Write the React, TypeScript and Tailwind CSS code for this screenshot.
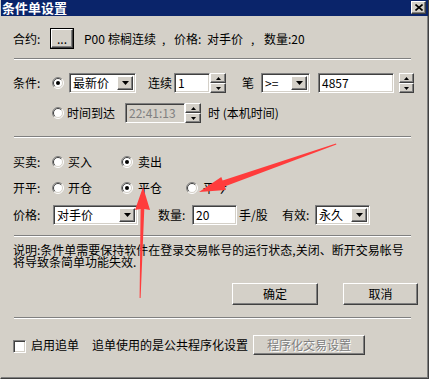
import React from "react";

const sunken =
  "border border-t-[#808080] border-l-[#808080] border-b-white border-r-white shadow-[inset_1px_1px_0_#404040,inset_-1px_-1px_0_#d4d0c8]";
const raised =
  "border border-t-white border-l-white border-b-[#404040] border-r-[#404040] shadow-[inset_-1px_-1px_0_#808080]";

function Radio({ checked }: { checked?: boolean }) {
  return (
    <svg width="12" height="12" viewBox="0 0 12 12" className="block shrink-0">
      <circle cx="6" cy="6" r="5" fill="#fff" />
      <path d="M2.1 9.9 A5.5 5.5 0 0 1 9.9 2.1" stroke="#808080" fill="none" strokeWidth="1" />
      <path d="M9.9 2.1 A5.5 5.5 0 0 1 2.1 9.9" stroke="#fff" fill="none" strokeWidth="1" />
      <path d="M2.8 9.2 A4.5 4.5 0 0 1 9.2 2.8" stroke="#404040" fill="none" strokeWidth="1" />
      <path d="M9.2 2.8 A4.5 4.5 0 0 1 2.8 9.2" stroke="#d4d0c8" fill="none" strokeWidth="1" />
      {checked && <circle cx="6" cy="6" r="2" fill="#000" />}
    </svg>
  );
}

function Arrow({ up }: { up?: boolean }) {
  return (
    <svg width="5" height="3" viewBox="0 0 5 3" className="block">
      {up ? <path d="M2.5 0 L5 3 L0 3 Z" fill="#000" /> : <path d="M0 0 L5 0 L2.5 3 Z" fill="#000" />}
    </svg>
  );
}

function Combo({ w, text }: { w: string; text: string }) {
  return (
    <div className={`${sunken} ${w} h-[20px] bg-white flex items-center p-[2px] shrink-0`}>
      <span className="flex-1 pl-[1px] whitespace-nowrap leading-[16px]">{text}</span>
      <div className={`${raised} w-[16px] h-full bg-[#d4d0c8] flex items-center justify-center shrink-0`}>
        <svg width="7" height="4" viewBox="0 0 7 4" className="block">
          <path d="M0 0 L7 0 L3.5 4 Z" fill="#000" />
        </svg>
      </div>
    </div>
  );
}

function Edit({ w, text, disabled }: { w: string; text: string; disabled?: boolean }) {
  return (
    <div
      className={`${sunken} ${w} h-[20px] ${disabled ? "bg-[#d4d0c8] text-[#808080]" : "bg-white"} flex items-center pl-[3px] shrink-0 whitespace-nowrap leading-[16px]`}
    >
      {text}
    </div>
  );
}

function Spin({ w }: { w: string }) {
  return (
    <div className={`${w} h-[20px] flex flex-col shrink-0`}>
      <div className={`${raised} h-[10px] bg-[#d4d0c8] flex items-center justify-center`}>
        <Arrow up />
      </div>
      <div className={`${raised} h-[10px] bg-[#d4d0c8] flex items-center justify-center`}>
        <Arrow />
      </div>
    </div>
  );
}

function Sep({ mt }: { mt: string }) {
  return <div className={`${mt} ml-[13px] w-[397px] h-[2px] border-t border-t-[#808080] border-b border-b-white shrink-0`} />;
}

export default function App() {
  return (
    <div className="relative w-[432px] h-[380px] bg-white overflow-hidden font-['Noto_Sans_CJK_SC','Liberation_Sans',sans-serif] text-[12px] text-black leading-none">
      <div className="flex flex-col w-[429px] h-[379px] bg-[#d4d0c8] border-l border-l-[#d4d0c8] border-r border-b border-r-[#404040] border-b-[#404040] shadow-[inset_-1px_-1px_0_#808080]">
        {/* title bar */}
        <div className="h-[16px] bg-[#0a246a] flex items-start justify-between pl-[1px] pr-[2px] shrink-0">
          <span className="text-white font-bold text-[13px] leading-[16px]">条件单设置</span>
          <div className={`${raised} mt-[1px] w-[15px] h-[13px] bg-[#d4d0c8] flex items-center justify-center`}>
            <svg width="8" height="7" viewBox="0 0 8 7" className="block">
              <path d="M0.5 0.5 L7.5 6.5 M7.5 0.5 L0.5 6.5" stroke="#000" strokeWidth="1.6" />
            </svg>
          </div>
        </div>

        {/* row 1 */}
        <div className="flex items-center h-[21px] mt-[12px] pl-[12px] shrink-0 whitespace-nowrap">
          <span className="w-[37px]">合约:</span>
          <div className="w-[24px] h-[21px] border border-black flex shrink-0">
            <div className={`${raised} flex-1 bg-[#d4d0c8] flex items-center justify-center`}>...</div>
          </div>
          <span className="ml-[10px] w-[24px]">P00</span>
          <span className="w-[54px]">棕榈连续</span>
          <span className="w-[12px]">,</span>
          <span className="w-[33px]">价格:</span>
          <span className="w-[44px]">对手价</span>
          <span className="w-[13px]">,</span>
          <span>数量:20</span>
        </div>

        <Sep mt="mt-[9px]" />

        {/* row 2 */}
        <div className="flex items-center h-[20px] mt-[13px] pl-[12px] shrink-0 whitespace-nowrap">
          <span className="w-[39px]">条件:</span>
          <div className="w-[17px]">
            <Radio checked />
          </div>
          <Combo w="w-[67px]" text="最新价" />
          <span className="w-[38px] pl-[12px]">连续</span>
          <Edit w="w-[36px]" text="1" />
          <Spin w="w-[16px]" />
          <span className="w-[35px] pl-[16px]">笔</span>
          <Combo w="w-[49px]" text=">=" />
          <div className="w-[8px]" />
          <Edit w="w-[76px]" text="4857" />
          <div className="w-[5px]" />
          <Spin w="w-[15px]" />
        </div>

        {/* row 3 */}
        <div className="flex items-center h-[20px] mt-[10px] pl-[12px] shrink-0 whitespace-nowrap">
          <span className="w-[39px]" />
          <div className="w-[15px]">
            <Radio />
          </div>
          <span className="w-[58px]">时间到达</span>
          <Edit w="w-[60px]" text="22:41:13" disabled />
          <Spin w="w-[16px]" />
          <span className="ml-[7px]">时 (本机时间)</span>
        </div>

        <Sep mt="mt-[13px]" />

        {/* row 4 */}
        <div className="flex items-center h-[16px] mt-[16px] pl-[12px] shrink-0 whitespace-nowrap">
          <span className="w-[39px]">买卖:</span>
          <div className="w-[16px]">
            <Radio />
          </div>
          <span className="w-[53px]">买入</span>
          <div className="w-[17px]">
            <Radio checked />
          </div>
          <span>卖出</span>
        </div>

        {/* row 5 */}
        <div className="flex items-center h-[16px] mt-[10px] pl-[12px] shrink-0 whitespace-nowrap">
          <span className="w-[39px]">开平:</span>
          <div className="w-[16px]">
            <Radio />
          </div>
          <span className="w-[53px]">开仓</span>
          <div className="w-[17px]">
            <Radio checked />
          </div>
          <span className="w-[48px]">平仓</span>
          <div className="w-[17px]">
            <Radio />
          </div>
          <span>平今</span>
        </div>

        {/* row 6 */}
        <div className="flex items-center h-[20px] mt-[9px] pl-[12px] shrink-0 whitespace-nowrap">
          <span className="w-[40px]">价格:</span>
          <Combo w="w-[85px]" text="对手价" />
          <span className="w-[54px] pl-[20px]">数量:</span>
          <Edit w="w-[45px]" text="20" />
          <span className="w-[45px] pl-[2px]">手/股</span>
          <span className="w-[33px]">有效:</span>
          <Combo w="w-[55px]" text="永久" />
        </div>

        <Sep mt="mt-[10px]" />

        {/* note */}
        <div className="mt-[7px] pl-[12px] leading-[12px] whitespace-nowrap shrink-0">
          <div>说明:条件单需要保持软件在登录交易帐号的运行状态,关闭、断开交易帐号</div>
          <div>将导致条简单功能失效.</div>
        </div>

        {/* buttons */}
        <div className="flex h-[22px] mt-[15px] shrink-0">
          <div className={`${raised} ml-[231px] w-[86px] h-[22px] flex items-center justify-center`}>确定</div>
          <div className={`${raised} ml-[25px] w-[75px] h-[22px] flex items-center justify-center`}>取消</div>
        </div>

        <Sep mt="mt-[12px]" />

        {/* bottom row */}
        <div className="flex items-center h-[20px] mt-[16px] pl-[12px] shrink-0 whitespace-nowrap">
          <div className="w-[18px] pt-[3px]">
            <div className={`${sunken} w-[13px] h-[13px] bg-white`} />
          </div>
          <span className="w-[61px]">启用追单</span>
          <span className="w-[161px]">追单使用的是公共程序化设置</span>
          <div
            className={`${raised} w-[112px] h-[20px] flex items-center justify-center text-[#808080] [text-shadow:1px_1px_0_#fff]`}
          >
            程序化交易设置
          </div>
        </div>
      </div>

      {/* red arrows overlay */}
      <svg className="absolute left-0 top-0 pointer-events-none" width="432" height="380" viewBox="0 0 432 380">
        <polygon points="143,187 150,210 144.3,209 140.6,298 139.6,298 140.6,209 135,210" fill="#ff3c3c" />
        <polygon points="199,192 221.3,176.9 222.6,180.5 336,143.5 336.4,144.6 224.6,186.5 225.9,190.1" fill="#ff3c3c" />
      </svg>
    </div>
  );
}
